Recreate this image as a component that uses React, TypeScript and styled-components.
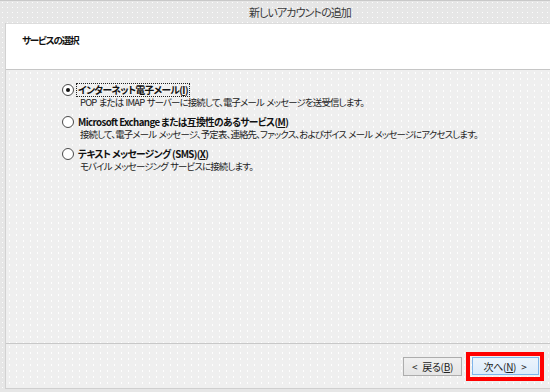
import styled, { createGlobalStyle } from "styled-components";

const GlobalStyle = createGlobalStyle`
  html, body {
    margin: 0;
    padding: 0;
  }
  body {
    width: 550px;
    height: 392px;
    overflow: hidden;
    font-family: "Noto Sans CJK JP", "Noto Sans", sans-serif;
    font-feature-settings: "palt";
    background-color: #e6e6e6;
    background-image: radial-gradient(rgba(255, 255, 255, 0.9) 0.7px, transparent 0.9px);
    background-size: 5px 5px;
  }
`;

const Window = styled.div`
  display: flex;
  flex-direction: column;
  width: 550px;
  height: 392px;
  border-top: 1px solid #c9c9c9;
  box-sizing: border-box;
`;

const TitleBar = styled.div`
  display: flex;
  align-items: center;
  justify-content: center;
  height: 22px;
  padding-left: 50px;
  font-size: 11px;
  letter-spacing: -0.9px;
  color: #3a3a3a;
  white-space: nowrap;
`;

const Frame = styled.div`
  display: flex;
  flex-direction: column;
  height: 366px;
  margin-left: 5px;
  border-left: 1px solid #d2d2d2;
  border-bottom: 1px solid #cfcfcf;
  box-sizing: border-box;
`;

const Header = styled.div`
  height: 47px;
  background: #fff;
  border-top: 1px solid #dcdcdc;
  border-bottom: 1px solid #c6c6c6;
  padding: 9px 0 0 16px;
  box-sizing: border-box;
  font-size: 9.6px;
  font-weight: bold;
  letter-spacing: -1.2px;
  color: #111;
`;

const Body = styled.div`
  flex: 1;
  display: flex;
  flex-direction: column;
  gap: 6px;
  padding: 13px 0 0 56px;
  background-color: #efefef;
  background-image: radial-gradient(rgba(255, 255, 255, 0.95) 0.6px, transparent 0.8px);
  background-size: 7px 6px;
  border-bottom: 1px solid #c8c8c8;
  box-shadow: 0 1px 0 #fafafa;
`;

const Option = styled.div`
  display: flex;
  flex-direction: column;
`;

const OptionLabel = styled.div`
  display: flex;
  align-items: center;
  height: 13px;
  font-size: 9.7px;
  font-weight: bold;
  letter-spacing: -0.6px;
  color: #111;
  white-space: nowrap;
`;

const Radio = styled.span<{ $checked?: boolean }>`
  display: inline-flex;
  align-items: center;
  justify-content: center;
  width: 10px;
  height: 10px;
  margin-right: 3px;
  border: 1px solid #4a4a4a;
  border-radius: 50%;
  background: #fff;
  box-sizing: content-box;

  &::after {
    content: "";
    display: ${(p) => (p.$checked ? "block" : "none")};
    width: 4px;
    height: 4px;
    border-radius: 50%;
    background: #111;
  }
`;

const LabelText = styled.span<{ $focused?: boolean }>`
  padding: 0 1px;
  outline: ${(p) => (p.$focused ? "1px dotted #222" : "none")};
  line-height: 12px;
`;

const Description = styled.div`
  height: 13px;
  line-height: 13px;
  padding-left: 18px;
  font-size: 9.4px;
  letter-spacing: -0.8px;
  word-spacing: 1px;
  color: #222;
  white-space: nowrap;
`;

const Footer = styled.div`
  height: 44px;
  display: flex;
  align-items: center;
  justify-content: flex-end;
  gap: 4px;
  padding: 0 6px 0 0;
  background-color: #efefef;
  background-image: radial-gradient(rgba(255, 255, 255, 0.95) 0.6px, transparent 0.8px);
  background-size: 7px 6px;
`;

const Button = styled.div<{ $default?: boolean }>`
  display: flex;
  align-items: center;
  justify-content: center;
  gap: 5px;
  width: ${(p) => (p.$default ? "67px" : "59px")};
  height: ${(p) => (p.$default ? "18px" : "19px")};
  box-sizing: border-box;
  border: 1px solid ${(p) => (p.$default ? "#7eb4ea" : "#adadad")};
  background: ${(p) =>
    p.$default
      ? "linear-gradient(#ecf4fc, #dcecfc)"
      : "linear-gradient(#f0f0f0, #e5e5e5)"};
  font-size: 10px;
  letter-spacing: -0.3px;
  color: #222;
  white-space: nowrap;
`;

const RedBox = styled.div`
  display: flex;
  align-items: center;
  justify-content: center;
  width: 78px;
  height: 29px;
  box-sizing: border-box;
  border: 4px solid #f00;
`;

const U = styled.span`
  text-decoration: underline;
`;

export default function App() {
  return (
    <>
      <GlobalStyle />
      <Window>
        <TitleBar>新しいアカウントの追加</TitleBar>
        <Frame>
          <Header>サービスの選択</Header>
          <Body>
            <Option>
              <OptionLabel>
                <Radio $checked />
                <LabelText $focused>
                  インターネット電子メール(<U>I</U>)
                </LabelText>
              </OptionLabel>
              <Description>
                POP または IMAP サーバーに接続して、電子メール メッセージを送受信します。
              </Description>
            </Option>
            <Option>
              <OptionLabel>
                <Radio />
                <LabelText>
                  Microsoft Exchange または互換性のあるサービス(<U>M</U>)
                </LabelText>
              </OptionLabel>
              <Description>
                接続して、電子メール メッセージ、予定表、連絡先、ファックス、およびボイス メール メッセージにアクセスします。
              </Description>
            </Option>
            <Option>
              <OptionLabel>
                <Radio />
                <LabelText>
                  テキスト メッセージング (SMS)(<U>X</U>)
                </LabelText>
              </OptionLabel>
              <Description>モバイル メッセージング サービスに接続します。</Description>
            </Option>
          </Body>
          <Footer>
            <Button>
              <span>&lt;</span>
              <span>
                戻る(<U>B</U>)
              </span>
            </Button>
            <RedBox>
              <Button $default>
                <span>
                  次へ(<U>N</U>)
                </span>
                <span>&gt;</span>
              </Button>
            </RedBox>
          </Footer>
        </Frame>
      </Window>
    </>
  );
}
